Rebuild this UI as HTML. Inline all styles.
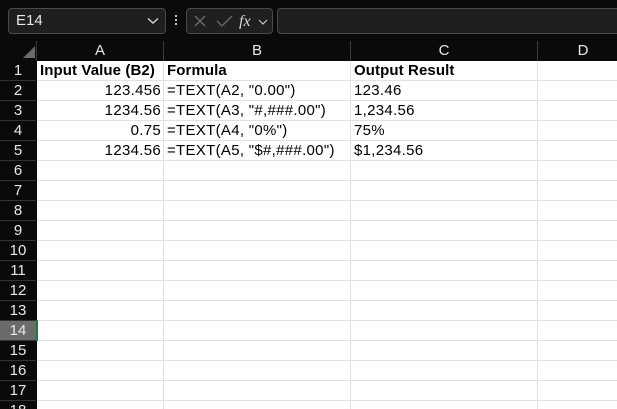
<!DOCTYPE html>
<html style="width:617px;height:409px;overflow:hidden"><head><style>
*{margin:0;padding:0;box-sizing:border-box}
body{width:617px;height:409px;overflow:hidden;background:#0a0a0a;font-family:"Liberation Sans",Arial,sans-serif;position:relative}
.abs{position:absolute}
.box{border:1px solid #4a4a4a;border-radius:4px;background:#1f1f1f}
.hdr{position:absolute;color:#e8e8e8;font-size:15px;text-align:center;line-height:19px}
.cell{position:absolute;font-size:15px;letter-spacing:0.3px;color:#000;line-height:20px;white-space:nowrap;overflow:hidden}
</style></head><body>
<div class="abs box" style="left:8px;top:8px;width:158px;height:26px"></div>
<div class="abs" style="left:16px;top:12px;color:#e8e8e8;font-size:15px">E14</div>
<svg class="abs" style="left:147px;top:17px" width="12" height="8"><path d="M1 1.5 L6 6 L11 1.5" stroke="#d0d0d0" stroke-width="1.4" fill="none"/></svg>
<div class="abs" style="left:175px;top:15px;width:2px;height:2px;background:#ccc;box-shadow:0 4px 0 #ccc,0 8px 0 #ccc"></div>
<div class="abs box" style="left:186px;top:8px;width:87px;height:26px"></div>
<svg class="abs" style="left:192px;top:13px" width="80" height="16">
<path d="M3 3 L13 13 M13 3 L3 13" stroke="#6a6a6a" stroke-width="1.3" fill="none"/>
<path d="M25 8 L30 13 L40 3" stroke="#6a6a6a" stroke-width="1.3" fill="none"/>
<text x="47" y="13" font-family="Liberation Serif,serif" font-style="italic" font-size="16" fill="#d8d8d8">fx</text>
<path d="M67 7 L71 11 L75 7" stroke="#c8c8c8" stroke-width="1.2" fill="none"/>
</svg>
<div class="abs box" style="left:277px;top:8px;width:360px;height:26px"></div>
<svg class="abs" style="left:22px;top:45px" width="14" height="14"><path d="M13 1 L13 13 L1 13 Z" fill="#6a6a6a"/></svg>
<div class="abs" style="left:36px;top:41px;width:1px;height:20px;background:#3a3a3a"></div>
<div class="abs" style="left:163px;top:41px;width:1px;height:20px;background:#3a3a3a"></div>
<div class="abs" style="left:350px;top:41px;width:1px;height:20px;background:#3a3a3a"></div>
<div class="abs" style="left:537px;top:41px;width:1px;height:20px;background:#3a3a3a"></div>
<div class="hdr" style="left:37px;top:41px;width:126px">A</div>
<div class="hdr" style="left:164px;top:41px;width:186px">B</div>
<div class="hdr" style="left:351px;top:41px;width:186px">C</div>
<div class="hdr" style="left:538px;top:41px;width:90px">D</div>
<div class="abs" style="left:37px;top:61px;width:580px;height:348px;background:#fff;
background-image:linear-gradient(#e1e1e1,#e1e1e1),linear-gradient(#e1e1e1,#e1e1e1),linear-gradient(#e1e1e1,#e1e1e1),repeating-linear-gradient(to bottom,transparent 0 19px,#e1e1e1 19px 20px);
background-size:1px 100%,1px 100%,1px 100%,100% 100%;background-position:126px 0,313px 0,500px 0,0 0;background-repeat:no-repeat"></div>
<div class="abs" style="left:0;top:321px;width:36px;height:20px;background:#6b6b6b"></div>
<div id="rows"></div>
<div class="abs" style="left:36px;top:320px;width:2px;height:21px;background:#1e7b45"></div>
<script>
var h='';for(var i=1;i<=18;i++){var t=61+(i-1)*20;h+='<div class="hdr" style="left:0;top:'+t+'px;width:36px;height:20px;line-height:20px;border-bottom:1px solid #333">'+i+'</div>';}
document.getElementById('rows').innerHTML=h;
</script>
<div class="cell" style="left:40px;top:61px;font-weight:bold;letter-spacing:0.1px">Input Value (B2)</div>
<div class="cell" style="left:167px;top:61px;font-weight:bold;letter-spacing:0.1px">Formula</div>
<div class="cell" style="left:354px;top:61px;font-weight:bold;letter-spacing:0.1px">Output Result</div>
<div class="cell" style="left:37px;top:81px;width:124px;text-align:right">123.456</div>
<div class="cell" style="left:37px;top:101px;width:124px;text-align:right">1234.56</div>
<div class="cell" style="left:37px;top:121px;width:124px;text-align:right">0.75</div>
<div class="cell" style="left:37px;top:141px;width:124px;text-align:right">1234.56</div>
<div class="cell" style="left:167px;top:81px">=TEXT(A2, "0.00")</div>
<div class="cell" style="left:167px;top:101px">=TEXT(A3, "#,###.00")</div>
<div class="cell" style="left:167px;top:121px">=TEXT(A4, "0%")</div>
<div class="cell" style="left:167px;top:141px;width:183px">=TEXT(A5, "$#,###.00")</div>
<div class="cell" style="left:354px;top:81px">123.46</div>
<div class="cell" style="left:354px;top:101px">1,234.56</div>
<div class="cell" style="left:354px;top:121px">75%</div>
<div class="cell" style="left:354px;top:141px">$1,234.56</div>
</body></html>
